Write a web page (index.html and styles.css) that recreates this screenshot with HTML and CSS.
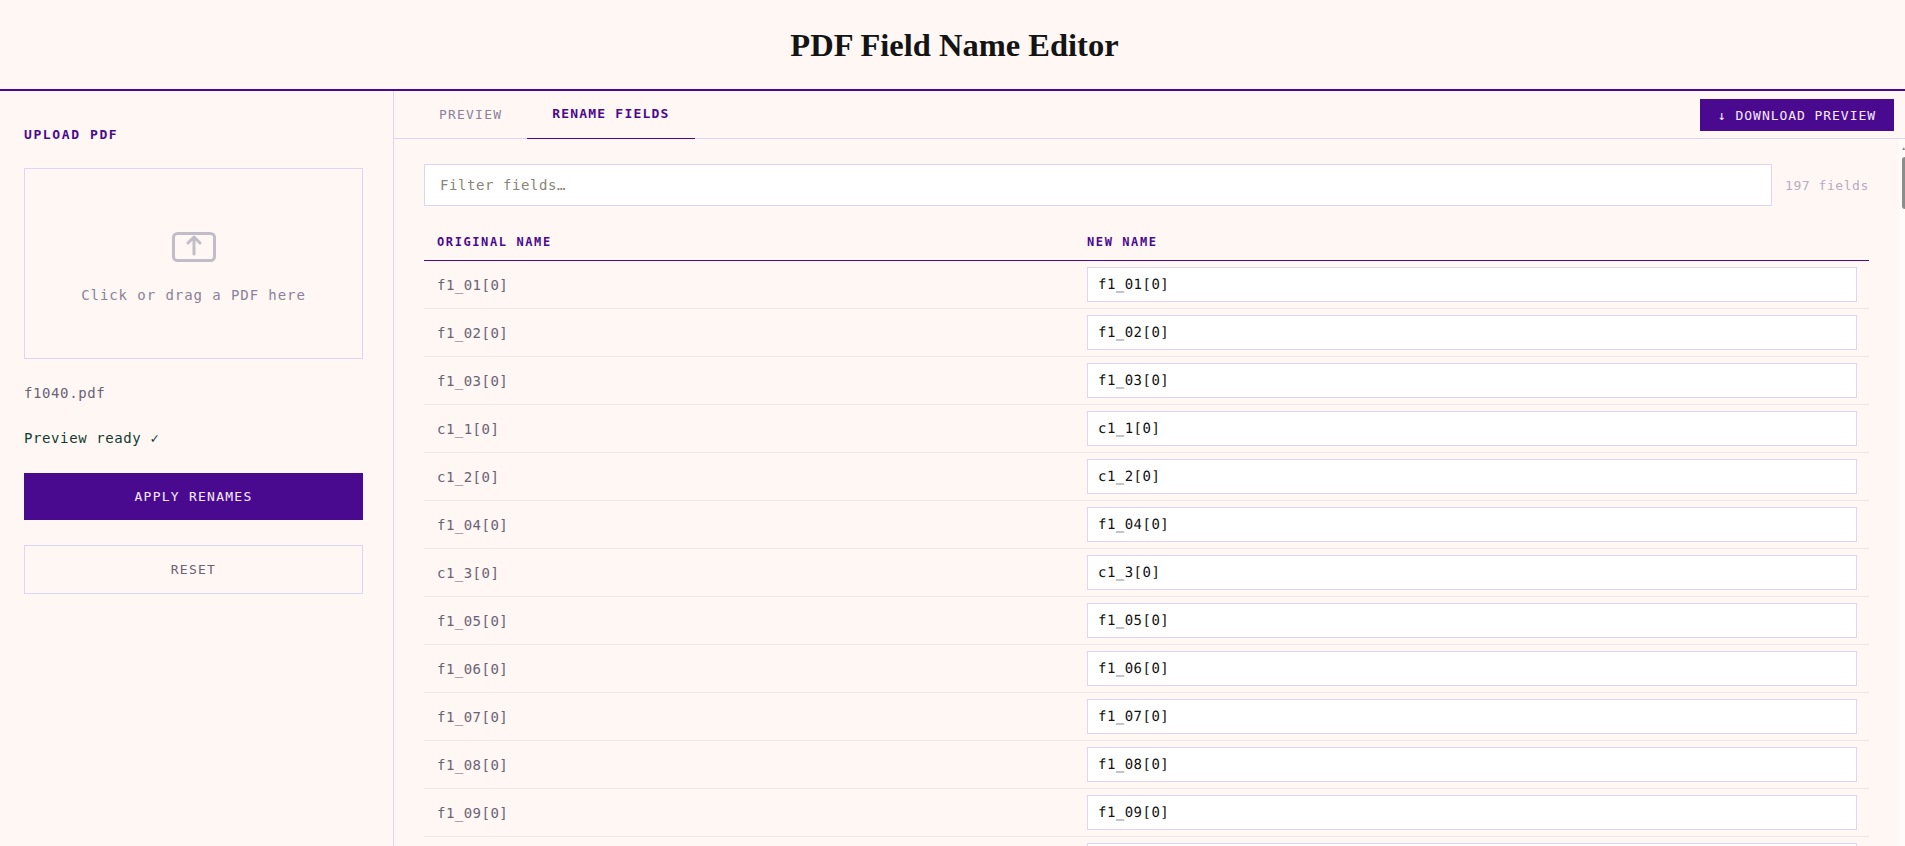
FILE: index.html
```html
<!DOCTYPE html>
<html lang="en">
<head>
<meta charset="utf-8">
<title>PDF Field Name Editor</title>
<link rel="stylesheet" href="styles.css">
</head>
<body>
<header class="topbar"><h1 class="title">PDF Field Name Editor</h1></header>
<div class="layout">
  <aside class="sidebar">
    <h2 class="section-label">UPLOAD PDF</h2>
    <div class="dropzone">
      <svg class="upload-icon" width="44" height="30" viewBox="0 0 44 30" fill="none" stroke="#c2bcc8" stroke-width="3" stroke-linecap="round" stroke-linejoin="round">
        <rect x="1.5" y="1.5" width="41" height="27" rx="4"/>
        <path d="M22 22V5M16 11l6-6 6 6"/>
      </svg>
      <p class="drop-text">Click or drag a PDF here</p>
    </div>
    <p class="file-name">f1040.pdf</p>
    <p class="status">Preview ready ✓</p>
    <button class="btn btn-primary">APPLY RENAMES</button>
    <button class="btn btn-secondary">RESET</button>
  </aside>
  <main class="main">
    <nav class="tabs">
      <span class="tab">PREVIEW</span>
      <span class="tab tab-active">RENAME FIELDS</span>
      <button class="download">↓ DOWNLOAD PREVIEW</button>
    </nav>
    <div class="panel">
      <div class="filter-row">
        <input class="filter" type="text" placeholder="Filter fields…">
        <span class="count">197 fields</span>
      </div>
      <div class="table-head"><span>ORIGINAL NAME</span><span>NEW NAME</span></div>
      <div class="row"><span class="orig">f1_01[0]</span><input class="name" value="f1_01[0]"></div>
      <div class="row"><span class="orig">f1_02[0]</span><input class="name" value="f1_02[0]"></div>
      <div class="row"><span class="orig">f1_03[0]</span><input class="name" value="f1_03[0]"></div>
      <div class="row"><span class="orig">c1_1[0]</span><input class="name" value="c1_1[0]"></div>
      <div class="row"><span class="orig">c1_2[0]</span><input class="name" value="c1_2[0]"></div>
      <div class="row"><span class="orig">f1_04[0]</span><input class="name" value="f1_04[0]"></div>
      <div class="row"><span class="orig">c1_3[0]</span><input class="name" value="c1_3[0]"></div>
      <div class="row"><span class="orig">f1_05[0]</span><input class="name" value="f1_05[0]"></div>
      <div class="row"><span class="orig">f1_06[0]</span><input class="name" value="f1_06[0]"></div>
      <div class="row"><span class="orig">f1_07[0]</span><input class="name" value="f1_07[0]"></div>
      <div class="row"><span class="orig">f1_08[0]</span><input class="name" value="f1_08[0]"></div>
      <div class="row"><span class="orig">f1_09[0]</span><input class="name" value="f1_09[0]"></div>
      <div class="row"><span class="orig"></span><input class="name" value=""></div>
    </div>
    <div class="scrollbar"><span class="scroll-arrow"></span><span class="scroll-thumb"></span></div>
  </main>
</div>
</body>
</html>
```
FILE: styles.css
```css
* { box-sizing: border-box; }
html, body { margin: 0; height: 100%; overflow: hidden; }
body {
  background: #fff7f3;
  font-family: "DejaVu Sans Mono", monospace;
  display: flex;
  flex-direction: column;
}
.topbar {
  height: 91px;
  flex: none;
  border-bottom: 2px solid #4a0a90;
  display: flex;
  align-items: center;
  justify-content: center;
  padding: 1px 0 0 4px;
}
.title {
  margin: 0;
  font: 700 32.5px "Liberation Serif", serif;
  color: #141414;
}
.layout { flex: 1; min-height: 0; display: flex; }
.sidebar {
  width: 394px;
  flex: none;
  border-right: 1px solid #ddd6f3;
  padding: 35px 30px 0 24px;
}
.section-label {
  margin: 0 0 25px;
  font-size: 13px;
  line-height: 17px;
  font-weight: 700;
  letter-spacing: 1.6px;
  color: #4a0a90;
}
.dropzone {
  height: 191px;
  border: 1px solid #ddd6f3;
  display: flex;
  flex-direction: column;
  align-items: center;
  padding-top: 63px;
}
.upload-icon { display: block; }
.drop-text {
  margin: 23px 0 0;
  font-size: 14px;
  line-height: 20px;
  letter-spacing: .93px;
  color: #8a829c;
}
.file-name {
  margin: 24px 0 0;
  font-size: 14px;
  line-height: 20px;
  color: #6a6276;
  letter-spacing: .6px;
}
.status {
  margin: 25px 0 0;
  font-size: 14px;
  line-height: 20px;
  color: #123c30;
  letter-spacing: .6px;
}
.btn {
  display: block;
  width: 100%;
  font-family: inherit;
  font-size: 13px;
  letter-spacing: 1.25px;
  cursor: pointer;
}
.btn-primary {
  margin-top: 25px;
  height: 47px;
  background: #4a0a90;
  color: #f7ecff;
  border: 0;
}
.btn-secondary {
  margin-top: 25px;
  height: 49px;
  background: transparent;
  border: 1px solid #ddd6f3;
  color: #6a6276;
}
.main { flex: 1; min-width: 0; display: flex; flex-direction: column; position: relative; }
.tabs {
  height: 48px;
  flex: none;
  display: flex;
  align-items: stretch;
  border-bottom: 1px solid #ddd6f3;
  padding-left: 20px;
}
.tab {
  display: flex;
  align-items: center;
  padding: 0 25px 2px;
  font-size: 13px;
  letter-spacing: 1.2px;
  color: #8a829c;
  margin-bottom: -1px;
}
.tab-active {
  color: #4a0a90;
  font-weight: 700;
  border-bottom: 1px solid #4a0a90;
}
.download {
  margin: 8px 11px 7px auto;
  width: 194px;
  background: #4a0a90;
  color: #f7ecff;
  border: 0;
  font-family: inherit;
  font-size: 13px;
  letter-spacing: .95px;
}
.panel { flex: 1; min-height: 0; overflow: hidden; padding: 25px 36px 0 30px; }
.filter-row { display: flex; align-items: center; gap: 13px; }
.filter {
  flex: 1;
  min-width: 0;
  height: 42px;
  background: #fff;
  border: 1px solid #ddd6f3;
  border-radius: 0;
  padding: 0 15px;
  font-family: inherit;
  font-size: 14px;
  line-height: 22px;
  letter-spacing: .57px;
  outline: 0;
}
.filter::placeholder { color: #8a8578; opacity: 1; }
.count { flex: none; width: 84px; font-size: 13px; letter-spacing: .55px; color: #b4adc4; }
.table-head {
  margin-top: 21px;
  height: 34px;
  display: grid;
  grid-template-columns: 1fr 782px;
  align-items: center;
  padding-left: 13px;
  border-bottom: 1px solid #4a0a90;
  font-size: 12px;
  font-weight: 700;
  letter-spacing: 1.6px;
  color: #4a0a90;
}
.table-head span { padding-bottom: 4px; }
.row {
  height: 48px;
  display: grid;
  grid-template-columns: 1fr 782px;
  align-items: center;
  padding-left: 13px;
  border-bottom: 1px solid #ece8e6;
}
.orig { font-size: 14px; letter-spacing: .47px; color: #6a6276; }
.name {
  width: 770px;
  height: 35px;
  background: #fff;
  border: 1px solid #ddd6f3;
  border-radius: 0;
  padding: 0 10px;
  font-family: inherit;
  font-size: 14px;
  line-height: 22px;
  letter-spacing: .47px;
  color: #111;
  outline: 0;
  text-rendering: geometricPrecision;
}
.scrollbar {
  position: absolute;
  top: 48px;
  right: 0;
  bottom: 0;
  width: 6px;
  background: #fffbf9;
}
.scroll-arrow {
  position: absolute;
  top: 8px;
  right: 0;
  border-left: 2px solid transparent;
  border-right: 1px solid transparent;
  border-bottom: 3px solid #8c8c8c;
}
.scroll-thumb {
  position: absolute;
  top: 18px;
  right: 0;
  width: 3px;
  height: 52px;
  background: #8c8c8c;
  border-radius: 3px 0 0 3px;
}
```
